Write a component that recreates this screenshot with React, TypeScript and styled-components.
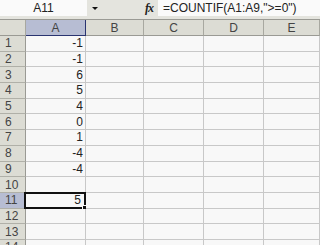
import React from "react";
import styled, { createGlobalStyle } from "styled-components";

const Global = createGlobalStyle`
  html, body { margin: 0; padding: 0; background: #f8f8f8; }
  body { font-family: "Liberation Sans", Arial, sans-serif; font-size: 12px; color: #111; }
`;

const Page = styled.div`
  width: 320px;
  height: 245px;
  overflow: hidden;
  background: #f8f8f8;
`;

const FormulaBar = styled.div`
  display: flex;
  align-items: flex-start;
  height: 20px;
  box-sizing: border-box;
  background: #e4e4de;
  border-bottom: 1px solid #9a9a94;
`;

const NameBox = styled.div`
  width: 87px;
  height: 16px;
  background: #fafafa;
  display: flex;
  align-items: center;
  justify-content: center;
  font-size: 12px;
  color: #222;
  padding-right: 0px;
`;

const DropButton = styled.div`
  width: 16px;
  height: 16px;
  display: flex;
  align-items: center;
  justify-content: center;
`;

const Arrow = styled.div`
  width: 0;
  height: 0;
  border-left: 3px solid transparent;
  border-right: 3px solid transparent;
  border-top: 3px solid #111;
  margin-top: 1px;
`;

const Fx = styled.div`
  margin-left: 40px;
  width: 12px;
  height: 16px;
  display: flex;
  align-items: center;
  justify-content: center;
  font-family: "Liberation Serif", "Times New Roman", serif;
  font-style: italic;
  font-weight: bold;
  font-size: 12px;
  color: #222;
  letter-spacing: -1px;
`;

const FormulaInput = styled.div`
  flex: 1;
  height: 16px;
  margin-left: 3px;
  background: #fafafa;
  display: flex;
  align-items: center;
  padding-left: 5px;
  font-size: 12px;
  color: #222;
  white-space: nowrap;
`;

const Grid = styled.div`
  display: grid;
  grid-template-columns: 26px 60px 58px 60px 60px 1fr;
  grid-template-rows: 16px;
  grid-auto-rows: 15.7px;
`;

const ColHeader = styled.div<{ $active?: boolean }>`
  box-sizing: border-box;
  background: ${(p) => (p.$active ? "#b7bdd3" : "#dcdcd4")};
  border-right: 1px solid ${(p) => (p.$active ? "#2a3470" : "#a8a8a0")};
  border-bottom: 1px solid ${(p) => (p.$active ? "#2a3470" : "#9a9a94")};
  display: flex;
  align-items: center;
  justify-content: center;
  font-size: 12px;
  color: #444;
`;

const RowHeader = styled.div<{ $active?: boolean }>`
  box-sizing: border-box;
  background: ${(p) => (p.$active ? "#b7bdd3" : "#dcdcd4")};
  border-right: 1px solid ${(p) => (p.$active ? "#2a3470" : "#9a9a94")};
  border-bottom: 1px solid #b0b0a8;
  display: flex;
  align-items: center;
  padding-left: 5px;
  font-size: 12px;
  color: #444;
`;

const Cell = styled.div<{ $selected?: boolean }>`
  position: relative;
  box-sizing: border-box;
  border-right: 1px solid #c8c8c8;
  border-bottom: 1px solid #c8c8c8;
  background: #f8f8f8;
  display: flex;
  align-items: center;
  justify-content: flex-end;
  padding-right: ${(p) => (p.$selected ? "4px" : "2px")};
  font-size: 12px;
  color: #222;
  ${(p) =>
    p.$selected &&
    `
    &::before {
      content: "";
      position: absolute;
      left: -2px;
      top: -1px;
      right: -1px;
      bottom: -1px;
      border: 2px solid #111;
    }
    &::after {
      content: "";
      position: absolute;
      right: -3px;
      bottom: -3px;
      width: 4px;
      height: 4px;
      background: #111;
      border: 1px solid #f8f8f8;
    }
  `}
`;

const columns = ["A", "B", "C", "D", "E"];
const values: (number | null)[] = [-1, -1, 6, 5, 4, 0, 1, -4, -4, null, 5, null, null, null];

export default function App() {
  return (
    <Page>
      <Global />
      <FormulaBar>
        <NameBox>A11</NameBox>
        <DropButton>
          <Arrow />
        </DropButton>
        <Fx>fx</Fx>
        <FormulaInput>=COUNTIF(A1:A9,"&gt;=0")</FormulaInput>
      </FormulaBar>
      <Grid>
        <ColHeader />
        {columns.map((c) => (
          <ColHeader key={c} $active={c === "A"}>
            {c}
          </ColHeader>
        ))}
        {values.map((v, i) => (
          <React.Fragment key={i}>
            <RowHeader $active={i === 10}>{i + 1}</RowHeader>
            <Cell $selected={i === 10}>{v === null ? "" : v}</Cell>
            <Cell />
            <Cell />
            <Cell />
            <Cell />
          </React.Fragment>
        ))}
      </Grid>
    </Page>
  );
}
